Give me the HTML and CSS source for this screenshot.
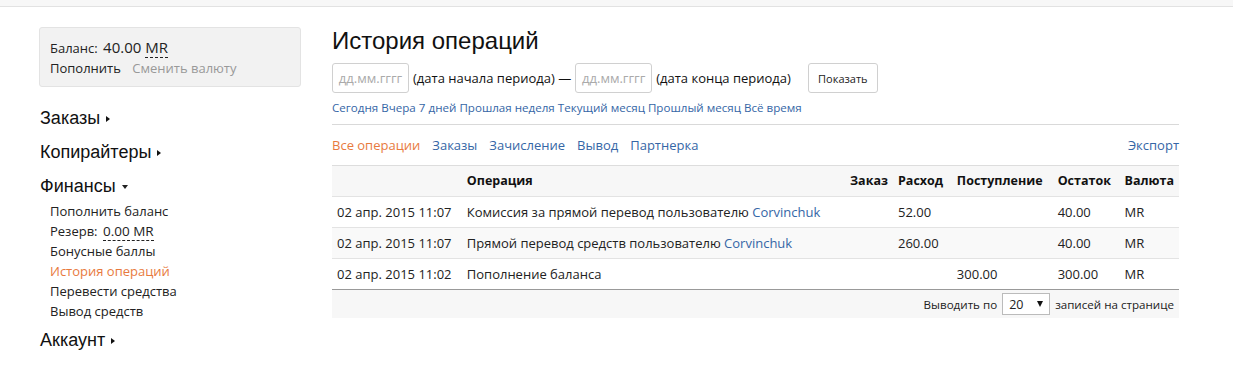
FILE: index.html
```html
<!DOCTYPE html>
<html lang="ru">
<head>
<meta charset="utf-8">
<title>История операций</title>
<link rel="stylesheet" href="styles.css">
</head>
<body>
<div class="topbar"></div>
<div class="page">
  <aside class="sidebar">
    <div class="balance-box">
      <div class="balance">Баланс: <span class="num">40.00 <span class="dashed">MR</span></span></div>
      <div class="balance-actions"><a class="dark">Пополнить</a> <a class="muted">Сменить валюту</a></div>
    </div>
    <nav class="menu">
      <div class="menu-head">Заказы <span class="tri-right"></span></div>
      <div class="menu-head">Копирайтеры <span class="tri-right"></span></div>
      <div class="menu-head open">Финансы <span class="tri-down"></span></div>
      <ul class="submenu">
        <li>Пополнить баланс</li>
        <li>Резерв: <span class="num dashed">0.00 MR</span></li>
        <li>Бонусные баллы</li>
        <li class="active">История операций</li>
        <li>Перевести средства</li>
        <li>Вывод средств</li>
      </ul>
      <div class="menu-head last">Аккаунт <span class="tri-right"></span></div>
    </nav>
  </aside>
  <main class="main">
    <h1 class="title">История операций</h1>
    <div class="filter">
      <span class="date-input">дд.мм.гггг</span>
      <span>(дата начала периода) —</span>
      <span class="date-input">дд.мм.гггг</span>
      <span class="end-label">(дата конца периода)</span>
      <button class="btn">Показать</button>
    </div>
    <div class="quick">
      <a>Сегодня</a> <a>Вчера</a> <a>7 дней</a> <a>Прошлая неделя</a> <a>Текущий месяц</a> <a>Прошлый месяц</a> <a>Всё время</a>
    </div>
    <div class="tabs">
      <div class="tab-list">
        <a class="active">Все операции</a>
        <a>Заказы</a>
        <a>Зачисление</a>
        <a>Вывод</a>
        <a>Партнерка</a>
      </div>
      <a>Экспорт</a>
    </div>
    <table class="ops">
      <thead>
        <tr>
          <th class="c-date"></th>
          <th class="c-op">Операция</th>
          <th class="c-order">Заказ</th>
          <th class="c-out">Расход</th>
          <th class="c-in">Поступление</th>
          <th class="c-rest">Остаток</th>
          <th class="c-cur">Валюта</th>
        </tr>
      </thead>
      <tbody>
        <tr>
          <td>02 апр. 2015 11:07</td>
          <td>Комиссия за прямой перевод пользователю <a>Corvinchuk</a></td>
          <td></td>
          <td>52.00</td>
          <td></td>
          <td>40.00</td>
          <td>MR</td>
        </tr>
        <tr class="alt">
          <td>02 апр. 2015 11:07</td>
          <td>Прямой перевод средств пользователю <a>Corvinchuk</a></td>
          <td></td>
          <td>260.00</td>
          <td></td>
          <td>40.00</td>
          <td>MR</td>
        </tr>
        <tr>
          <td>02 апр. 2015 11:02</td>
          <td>Пополнение баланса</td>
          <td></td>
          <td></td>
          <td>300.00</td>
          <td>300.00</td>
          <td>MR</td>
        </tr>
      </tbody>
    </table>
    <div class="pager">
      Выводить по
      <span class="select"><span>20</span><span class="sel-arrow"></span></span>
      записей на странице
    </div>
  </main>
</div>
</body>
</html>
```
FILE: styles.css
```css
* { box-sizing: border-box; }
html, body { margin: 0; padding: 0; background: #fff; }
body {
  font-family: "Open Sans", "Noto Sans", sans-serif;
  font-size: 13px;
  color: #222;
}
a { color: #3566a6; text-decoration: none; cursor: pointer; }

.topbar {
  height: 7px;
  background: #f7f7f7;
  border-bottom: 1px solid #e2e2e2;
}

.page {
  display: flex;
  gap: 31px;
  padding: 20px 0 0 39px;
}

.sidebar { width: 262px; flex: none; }

.balance-box {
  height: 60px;
  background: #f2f2f2;
  border: 1px solid #e3e3e3;
  border-radius: 3px;
  padding: 9px 10px;
}
.balance { line-height: 20px; font-size: 13px; }
.balance .num { font-size: 15px; margin-left: 2px; }
.dashed { border-bottom: 1px dashed #222; }
.balance-actions { line-height: 21px; }
.balance-actions a.dark { color: #222; margin-right: 8px; }
.balance-actions a.muted { color: #999; }

.menu { margin-top: 21px; padding-left: 1px; }
.menu-head {
  font-family: "Liberation Sans", Arial, sans-serif;
  font-size: 18px;
  line-height: 20px;
  color: #111;
  margin-bottom: 14px;
}
.menu-head.open { margin-bottom: 5px; }
.menu-head.last { margin-top: 9px; }
.tri-right {
  display: inline-block;
  width: 0; height: 0;
  border-top: 3.5px solid transparent;
  border-bottom: 3.5px solid transparent;
  border-left: 4px solid #111;
  vertical-align: 2px;
  margin-left: 1px;
}
.tri-down {
  display: inline-block;
  width: 0; height: 0;
  border-left: 3.5px solid transparent;
  border-right: 3.5px solid transparent;
  border-top: 4px solid #222;
  vertical-align: 3px;
  margin-left: 1px;
}
.submenu {
  list-style: none;
  margin: 0;
  padding: 0 0 0 10px;
}
.submenu li { line-height: 20px; color: #222; font-size: 13px; }
.submenu li.active { color: #e87a3e; }
.submenu .num { font-size: 13.5px; margin-left: 2px; }

.main { width: 847px; flex: none; }

.title {
  margin: 0;
  font-family: "Liberation Sans", Arial, sans-serif;
  font-weight: normal;
  font-size: 24px;
  line-height: 28px;
  color: #111;
}

.filter {
  display: flex;
  align-items: center;
  gap: 4px;
  margin-top: 8px;
  font-size: 13px;
  color: #111;
}
.date-input {
  width: 77px;
  height: 30px;
  border: 1px solid #d0d0d0;
  border-radius: 3px;
  color: #aaa;
  font-size: 13px;
  display: flex;
  align-items: center;
  justify-content: center;
}
.end-label { margin-right: 13px; }
.btn {
  height: 30px;
  width: 70px;
  border: 1px solid #d0d0d0;
  border-radius: 3px;
  background: #fff;
  font-family: "Open Sans", sans-serif;
  font-size: 11px;
  color: #222;
  padding: 0;
}

.quick {
  margin-top: 6px;
  font-size: 11.6px;
  line-height: 17px;
  padding-bottom: 8px;
  border-bottom: 1px solid #d9d9d9;
}

.tabs {
  display: flex;
  justify-content: space-between;
  margin-top: 11px;
  font-size: 13px;
  line-height: 18px;
}
.tab-list { display: flex; gap: 12px; }
.tab-list a.active { color: #e87a3e; }

.ops {
  width: 100%;
  margin-top: 11px;
  border-collapse: collapse;
  border-top: 1px solid #ddd;
  font-size: 13px;
}
.ops th, .ops td {
  text-align: left;
  padding: 6px 5px;
  line-height: 18px;
  white-space: nowrap;
  border-bottom: 1px solid #e3e3e3;
}
.ops th { font-weight: bold; background: #f7f7f7; color: #111; font-size: 12.5px; }
.ops tr.alt td { background: #f9f9f9; }
.ops tbody tr:last-child td { border-bottom: 1px solid #999; }
.c-date { width: 130px; }
.c-op { width: 384px; }
.c-order { width: 48px; }
.c-out { width: 59px; }
.c-in { width: 101px; }
.c-rest { width: 67px; }

.pager {
  height: 28px;
  background: #f7f7f7;
  display: flex;
  align-items: center;
  justify-content: flex-end;
  gap: 5px;
  padding-right: 5px;
  font-size: 11.6px;
}
.select {
  display: inline-flex;
  align-items: center;
  justify-content: space-between;
  width: 48px;
  height: 22px;
  border: 1px solid #bbb;
  background: #fff;
  padding: 0 6px 0 6px;
  font-size: 12.5px;
}
.sel-arrow {
  width: 0; height: 0;
  border-left: 3.5px solid transparent;
  border-right: 3.5px solid transparent;
  border-top: 6px solid #111;
}
```
